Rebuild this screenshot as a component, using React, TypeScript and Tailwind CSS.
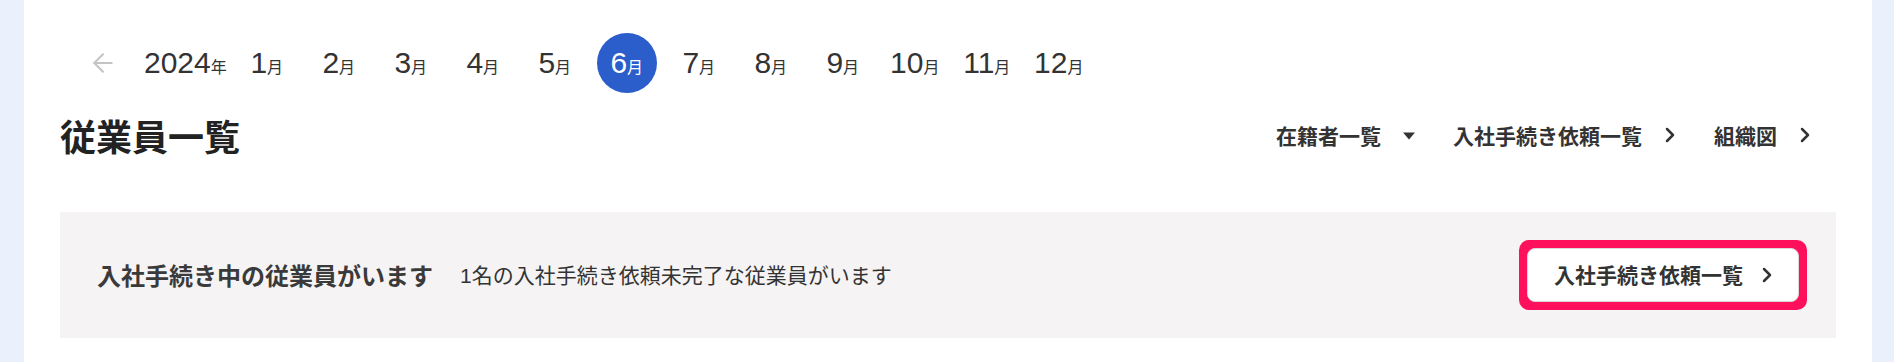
import { ArrowLeft, ChevronRight } from 'lucide-react';

const months = [1, 2, 3, 4, 5, 6, 7, 8, 9, 10, 11, 12];
const current = 6;

function Triangle() {
  return (
    <svg width="24" height="24" viewBox="0 0 24 24" className="text-[#333]">
      <path d="M6 9.5h12l-6 7z" fill="currentColor" />
    </svg>
  );
}

export default function App() {
  return (
    <div className="flex w-full h-[362px] bg-[#eaf1fc] font-['Liberation_Sans','Noto_Sans_CJK_JP',sans-serif] text-[#333]">
      <div className="w-[24px] shrink-0" />
      <main className="flex-1 bg-white pl-[36px] pr-[36px] pt-[33px]">
        {/* 年月ナビ */}
        <div className="flex items-center h-[60px]">
          <ArrowLeft size={30} strokeWidth={1.6} className="ml-[28px] text-[#c4c4c4]" />
          <div className="ml-[26px] flex items-baseline">
            <span className="text-[30px] leading-none">2024</span>
            <span className="text-[16px] leading-none">年</span>
          </div>
          <div className="ml-[10px] flex items-center gap-3">
            {months.map((m) => (
              <div
                key={m}
                className={
                  m === current
                    ? 'w-[60px] h-[60px] rounded-full bg-[#2b5dcb] text-white flex items-center justify-center'
                    : 'w-[60px] h-[60px] rounded-full flex items-center justify-center'
                }
              >
                <span className="flex items-baseline">
                  <span className="text-[30px] leading-none">{m}</span>
                  <span className="text-[16px] leading-none">月</span>
                </span>
              </div>
            ))}
          </div>
        </div>

        {/* タイトル */}
        <div className="mt-[18px] h-[48px] flex items-center justify-between">
          <h1 className="text-[36px] font-bold leading-none text-[#222] font-['Noto_Sans_CJK_JP',sans-serif]">
            従業員一覧
          </h1>
          <div className="flex items-center gap-[32px] pr-[19px] text-[21px] font-bold leading-none font-['Noto_Sans_CJK_JP',sans-serif]">
            <div className="flex items-center gap-4">
              <span>在籍者一覧</span>
              <Triangle />
            </div>
            <div className="flex items-center gap-4">
              <span>入社手続き依頼一覧</span>
              <ChevronRight size={24} strokeWidth={2.5} />
            </div>
            <div className="flex items-center gap-4">
              <span>組織図</span>
              <ChevronRight size={24} strokeWidth={2.5} />
            </div>
          </div>
        </div>

        {/* お知らせ */}
        <div className="mt-[53px] h-[126px] bg-[#f5f3f4] flex items-center justify-between pl-[37px] pr-[29px]">
          <div className="flex items-center gap-[27px]">
            <span className="text-[24px] font-bold leading-none text-[#3a3a3a] font-['Noto_Sans_CJK_JP',sans-serif]">
              入社手続き中の従業員がいます
            </span>
            <span className="text-[21px] leading-none text-[#333]">
              1名の入社手続き依頼未完了な従業員がいます
            </span>
          </div>
          <div className="p-[8px] rounded-[10px] bg-[#ff105c]">
            <button className="h-[54px] w-[272px] flex items-center justify-between pl-[26px] pr-[19px] bg-white border border-[#d9d9d9] rounded-[8px] text-[21px] font-bold text-[#333] font-['Noto_Sans_CJK_JP',sans-serif]">
              <span>入社手続き依頼一覧</span>
              <ChevronRight size={24} strokeWidth={2.5} />
            </button>
          </div>
        </div>
      </main>
      <div className="w-[22px] shrink-0" />
    </div>
  );
}
